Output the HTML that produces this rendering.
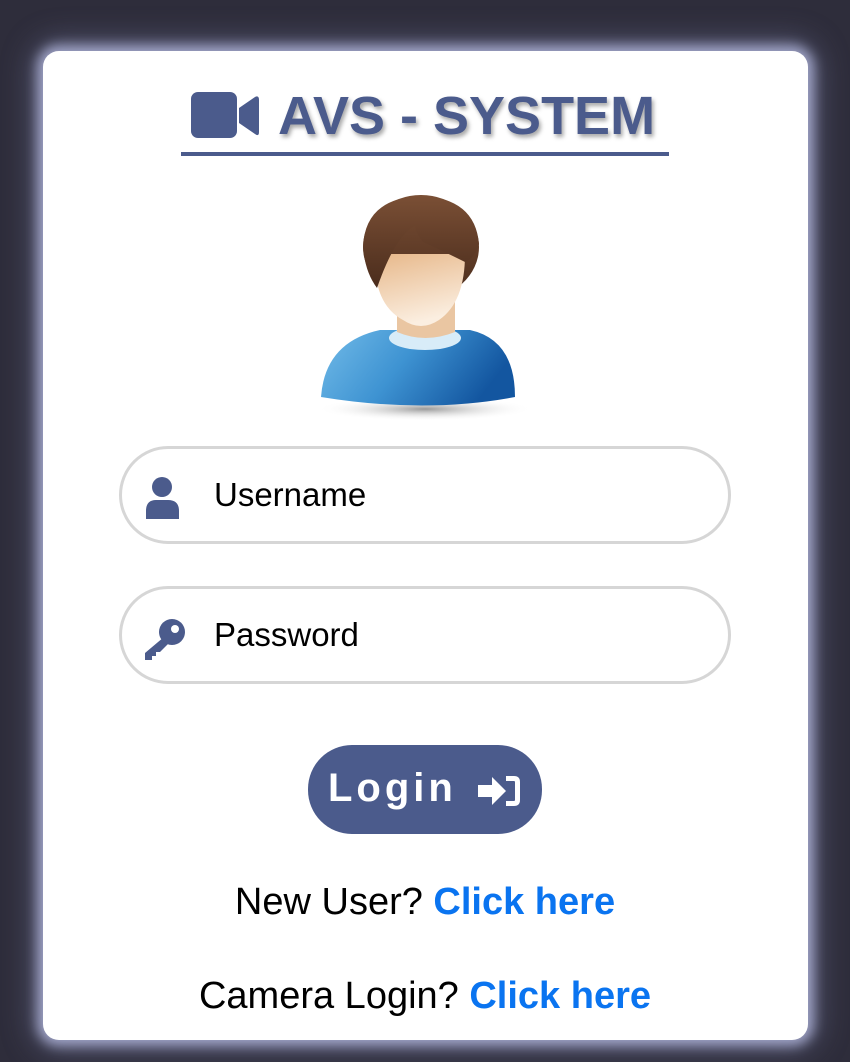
<!DOCTYPE html>
<html><head><meta charset="utf-8"><style>
html,body{margin:0;padding:0}
body{width:850px;height:1062px;background:#2e2d3b;position:relative;overflow:hidden;font-family:"Liberation Sans",sans-serif}
.card{position:absolute;left:43px;top:51px;width:765px;height:989px;background:#fff;border-radius:16px;box-shadow:0 0 12px 6px rgba(190,195,235,.75),0 0 30px 12px rgba(140,145,190,.35)}
.title{position:absolute;left:181px;top:78px;width:488px;height:74px;border-bottom:4px solid #4b5b8c;color:#4b5b8c;font-weight:bold;font-size:54px;text-shadow:2px 3px 4px rgba(0,0,0,.35)}
.title span{position:absolute;left:97px;top:7px;white-space:nowrap;letter-spacing:0px}
.title svg{position:absolute;left:10px;top:14px}
.inp{position:absolute;left:119px;width:606px;height:92px;border:3px solid #d6d6d6;border-radius:50px;background:#fff}
.inp span{position:absolute;left:92px;top:27px;font-size:33px;color:#000}
.inp svg{position:absolute;left:22px}
.btn{position:absolute;left:308px;top:745px;width:234px;height:89px;border-radius:44px;background:#4b5b8c;color:#fff;font-weight:bold;font-size:40px;letter-spacing:4px}
.btn span{position:absolute;left:20px;top:21px}
.btn svg{position:absolute;left:168px;top:29px}
.lnk{position:absolute;left:0;width:850px;text-align:center;font-size:38px;color:#000}
.lnk b{color:#0a74f0}
</style></head><body>
<div class="card"></div>
<div class="title">
<svg width="70" height="48" viewBox="0 0 70 48"><rect x="0" y="0" width="46" height="46" rx="7" fill="#4b5b8c"/><path d="M48 16 L64 5 Q68 3 68 8 L68 40 Q68 45 64 42 L48 31Z" fill="#4b5b8c"/></svg>
<span>AVS - SYSTEM</span></div>
<svg style="position:absolute;left:315px;top:192px" width="220" height="232" viewBox="0 0 220 232">
<defs>
<radialGradient id="sh" cx="50%" cy="50%" r="50%"><stop offset="0" stop-color="#555" stop-opacity=".6"/><stop offset="1" stop-color="#fff" stop-opacity="0"/></radialGradient>
<linearGradient id="bd" x1="0" x2="1" y1="0" y2="0.3"><stop offset="0" stop-color="#72bbe8"/><stop offset=".5" stop-color="#3e93d2"/><stop offset="1" stop-color="#1356a0"/></linearGradient>
<linearGradient id="fc" x1="0" x2="0.3" y1="0" y2="1"><stop offset="0" stop-color="#e7b88a"/><stop offset="1" stop-color="#fbeee0"/></linearGradient>
<linearGradient id="hr" x1="0" x2="0" y1="0" y2="1"><stop offset="0" stop-color="#7a4f35"/><stop offset="1" stop-color="#4a2c1c"/></linearGradient>
</defs>
<ellipse cx="110" cy="217" rx="108" ry="12" fill="url(#sh)"/>
<path d="M6 205 Q10 150 65 138 L155 138 Q200 148 200 205 Q110 222 6 205Z" fill="url(#bd)"/>
<path d="M82 110 L82 145 Q110 160 140 145 L140 110Z" fill="#eac6a2"/>
<ellipse cx="110" cy="146" rx="36" ry="12" fill="#d8ecf8"/>
<path d="M82 140 Q110 152 140 140 L140 120 Q110 135 82 120Z" fill="#eac6a2"/>
<ellipse cx="106" cy="55" rx="58" ry="52" fill="url(#hr)"/>
<path d="M60 62 Q58 112 88 128 Q106 140 124 128 Q150 110 150 62Z" fill="url(#fc)"/>
<path d="M48 55 Q50 6 106 4 Q160 6 164 52 Q160 66 150 70 Q130 60 108 50 Q100 40 100 34 Q80 44 62 96 Q50 80 48 55Z" fill="url(#hr)"/>
</svg>
<div class="inp" style="top:446px"><svg style="top:28px" width="38" height="42" viewBox="0 0 38 42"><circle cx="18" cy="10" r="10" fill="#4b5b8c"/><path d="M2 42 L2 34 Q2 23 12 23 L24 23 Q35 23 35 34 L35 42Z" fill="#4b5b8c"/></svg><span>Username</span></div>
<div class="inp" style="top:586px"><svg style="top:28px" width="44" height="44" viewBox="0 0 44 44"><circle cx="28" cy="15" r="13" fill="#4b5b8c"/><circle cx="31" cy="12" r="4" fill="#fff"/><path d="M20 20 L1 36 L1 43 L8 43 L8 39 L12 39 L12 35 L16 35 L24 27Z" fill="#4b5b8c"/></svg><span>Password</span></div>
<div class="btn"><span>Login</span><svg width="46" height="34" viewBox="0 0 46 34"><path d="M2 11 L16 11 L16 3 L30 17 L16 31 L16 23 L2 23Z" fill="#fff"/><path d="M30 2 L38 2 Q44 2 44 8 L44 26 Q44 32 38 32 L30 32 L30 27 L38 27 Q39 27 39 26 L39 8 Q39 7 38 7 L30 7Z" fill="#fff"/></svg></div>
<div class="lnk" style="top:881px">New User? <b>Click here</b></div>
<div class="lnk" style="top:975px">Camera Login? <b>Click here</b></div>
</body></html>
